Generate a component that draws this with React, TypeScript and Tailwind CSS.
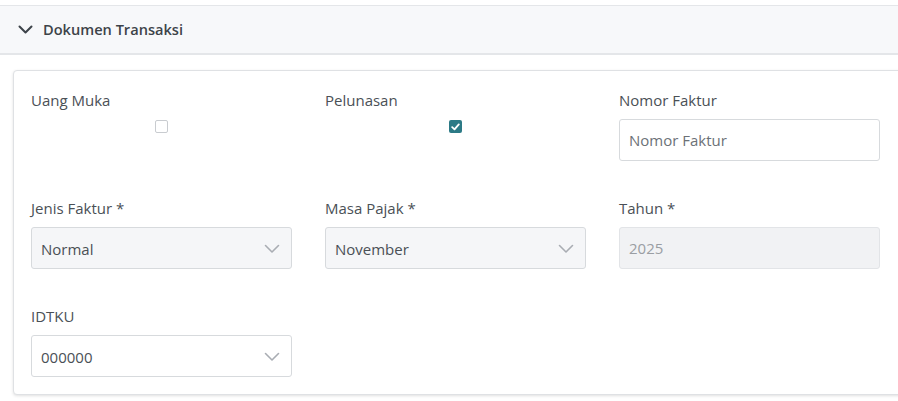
import React from "react";

const Chevron = () => (
  <svg width="16" height="10" viewBox="0 0 16 10" fill="none" className="shrink-0">
    <path d="M1.5 1.5 L8 8 L14.5 1.5" stroke="#a9adb3" strokeWidth="1.6" strokeLinecap="round" strokeLinejoin="round" />
  </svg>
);

const Label = ({ children }: { children: React.ReactNode }) => (
  <div className="text-[15px] leading-[22px] text-[#4a5056] mb-[8px]">{children}</div>
);

const Select = ({ value, gray }: { value: string; gray?: boolean }) => (
  <div
    className={`h-[42px] w-full rounded-[3px] border border-[#d7dadd] flex items-center justify-between pl-[9px] pr-[11px] pt-[2px] text-[15px] text-[#4a5056] ${gray ? "bg-[#f5f6f8]" : "bg-white"}`}
  >
    <span>{value}</span>
    <Chevron />
  </div>
);

export default function App() {
  return (
    <div className="w-[898px] h-[401px] overflow-hidden bg-white" style={{ fontFamily: '"Open Sans", "Noto Sans", sans-serif' }}>
      <div className="h-[5px]" />
      <div className="h-[50px] border-t border-b-2 border-[#e4e6e9] bg-[#f7f8fa] flex items-center pl-[18px] gap-[10px]">
        <svg width="15" height="10" viewBox="0 0 15 10" fill="none">
          <path d="M1.5 1.5 L7.5 7.5 L13.5 1.5" stroke="#3d4349" strokeWidth="2" strokeLinecap="round" strokeLinejoin="round" />
        </svg>
        <span className="text-[14.6px] font-semibold text-[#3d4349]">Dokumen Transaksi</span>
      </div>
      <div className="pt-[15px] pl-[13px]">
        <div className="w-[900px] rounded-[4px] border border-[#dfe1e4] shadow-[0_1px_3px_rgba(0,0,0,0.12)] bg-white pl-[17px] pr-[17px] pt-[18px] pb-[17px]">
          <div className="grid grid-cols-[261px_261px_261px] gap-x-[33px] gap-y-[36px]">
            <div>
              <Label>Uang Muka</Label>
              <div className="flex justify-center pt-[1px]">
                <div className="w-[13px] h-[13px] rounded-[2px] border border-[#c9ccd0] bg-white" />
              </div>
            </div>
            <div>
              <Label>Pelunasan</Label>
              <div className="flex justify-center pt-[1px]">
                <div className="w-[13px] h-[13px] rounded-[2px] bg-[#2c7a86] flex items-center justify-center">
                  <svg width="9" height="8" viewBox="0 0 9 8" fill="none">
                    <path d="M1.2 4.2 L3.5 6.4 L7.8 1.4" stroke="white" strokeWidth="1.8" strokeLinecap="round" strokeLinejoin="round" />
                  </svg>
                </div>
              </div>
            </div>
            <div>
              <Label>Nomor Faktur</Label>
              <div className="h-[42px] w-full rounded-[3px] border border-[#d7dadd] bg-white flex items-center pl-[9px] text-[15px] text-[#6c7177]">
                Nomor Faktur
              </div>
            </div>
            <div>
              <Label>Jenis Faktur *</Label>
              <Select value="Normal" gray />
            </div>
            <div>
              <Label>Masa Pajak *</Label>
              <Select value="November" gray />
            </div>
            <div>
              <Label>Tahun *</Label>
              <div className="h-[42px] w-full rounded-[3px] border border-[#e2e4e7] bg-[#f1f2f4] flex items-center pl-[9px] text-[15px] text-[#9a9ea3]">
                2025
              </div>
            </div>
            <div>
              <Label>IDTKU</Label>
              <Select value="000000" />
            </div>
          </div>
        </div>
      </div>
    </div>
  );
}
